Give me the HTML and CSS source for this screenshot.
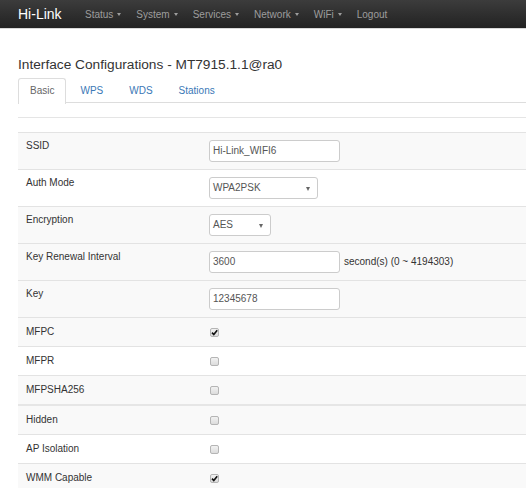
FILE: index.html
```html
<!DOCTYPE html>
<html>
<head>
<meta charset="utf-8">
<link rel="stylesheet" href="styles.css">
</head>
<body>
<header class="navbar">
  <span class="brand">Hi-Link</span>
  <ul class="nav">
    <li>Status<span class="caret"></span></li>
    <li>System<span class="caret"></span></li>
    <li>Services<span class="caret"></span></li>
    <li>Network<span class="caret"></span></li>
    <li>WiFi<span class="caret"></span></li>
    <li>Logout</li>
  </ul>
</header>
<main class="main">
  <h2 class="title">Interface Configurations - MT7915.1.1@ra0</h2>
  <ul class="tabs">
    <li class="tab active">Basic</li>
    <li class="tab">WPS</li>
    <li class="tab">WDS</li>
    <li class="tab">Stations</li>
  </ul>
  <div class="sep"></div>
  <table class="cfg">
    <tr class="g in"><td class="lbl">SSID</td><td><span class="field w130">Hi-Link_WIFI6</span></td></tr>
    <tr class="w in"><td class="lbl">Auth Mode</td><td><span class="field sel w109">WPA2PSK</span></td></tr>
    <tr class="g in"><td class="lbl">Encryption</td><td><span class="field sel w62">AES</span></td></tr>
    <tr class="g in"><td class="lbl">Key Renewal Interval</td><td><span class="inline"><span class="field w130">3600</span><span class="hint">second(s) (0 ~ 4194303)</span></span></td></tr>
    <tr class="g in"><td class="lbl">Key</td><td><span class="field w130">12345678</span></td></tr>
    <tr class="g cb"><td class="lbl">MFPC</td><td><span class="check on"><svg viewBox="0 0 9 9" width="9" height="9"><path d="M2 4.6 L3.8 6.6 L7.2 2.2" fill="none" stroke="#111" stroke-width="1.6"/></svg></span></td></tr>
    <tr class="w cb"><td class="lbl">MFPR</td><td><span class="check"></span></td></tr>
    <tr class="g cb"><td class="lbl">MFPSHA256</td><td><span class="check"></span></td></tr>
    <tr class="g cb thick"><td class="lbl">Hidden</td><td><span class="check"></span></td></tr>
    <tr class="w cb"><td class="lbl">AP Isolation</td><td><span class="check"></span></td></tr>
    <tr class="g cb"><td class="lbl">WMM Capable</td><td><span class="check on"><svg viewBox="0 0 9 9" width="9" height="9"><path d="M2 4.6 L3.8 6.6 L7.2 2.2" fill="none" stroke="#111" stroke-width="1.6"/></svg></span></td></tr>
  </table>
</main>
</body>
</html>
```
FILE: styles.css
```css
html, body {
  margin: 0;
  padding: 0;
  background: #fff;
  font-family: "Liberation Sans", Arial, sans-serif;
  overflow: hidden;
}

.navbar {
  height: 28px;
  background: linear-gradient(to bottom, #3c3c3c, #222);
  border-bottom: 1px solid #d8d8d8;
  display: flex;
  align-items: center;
  padding-left: 18px;
}

.brand {
  color: #fff;
  font-size: 14px;
  width: 67px;
}

.nav {
  list-style: none;
  margin: 0;
  padding: 0;
  display: flex;
  gap: 15px;
  font-size: 10px;
  color: #9d9d9d;
}

.nav li {
  display: flex;
  align-items: center;
}

.caret {
  display: inline-block;
  width: 0;
  height: 0;
  margin-left: 4px;
  border-left: 2.5px solid transparent;
  border-right: 2.5px solid transparent;
  border-top: 3px solid #9d9d9d;
}

.main {
  padding-left: 18px;
}

.title {
  margin: 0;
  padding-top: 27px;
  font-size: 13.7px;
  font-weight: normal;
  color: #333;
  line-height: 18px;
}

.tabs {
  list-style: none;
  margin: 4px 0 0 0;
  padding: 0;
  display: flex;
  border-bottom: 1px solid #ddd;
  font-size: 10px;
  height: 24px;
}

.tab {
  padding: 0 11px;
  margin-right: 2px;
  line-height: 24px;
  color: #3a78b6;
  border: 1px solid transparent;
  border-bottom: none;
  border-radius: 3px 3px 0 0;
}

.tab.active {
  color: #666;
  border-color: #ddd;
  background: #fff;
  height: 25px;
}

.sep {
  margin-top: 14px;
  border-top: 1px solid #e5e5e5;
}

.cfg {
  margin-top: 14px;
  width: 100%;
  border-collapse: collapse;
  font-size: 10px;
  color: #333;
}

.cfg td {
  border-top: 1px solid #e3e3e3;
  padding: 7px 8px;
  vertical-align: top;
  line-height: 14px;
}

.cfg tr.cb td {
  line-height: 15px;
}

.cfg tr.thick td {
  border-top: 2px solid #e6e6e6;
}

.cfg td.lbl {
  width: 167px;
  padding-top: 6px;
}

.cfg tr.g {
  background: #f9f9f9;
}

.cfg tr.w {
  background: #fff;
}

.field {
  display: block;
  box-sizing: border-box;
  height: 22px;
  line-height: 20px;
  border: 1px solid #ccc;
  border-radius: 3px;
  background: #fff;
  color: #555;
  padding: 0 3px;
  position: relative;
}

.w130 { width: 131px; }
.w109 { width: 109px; }
.w62 { width: 62px; }

.sel::after {
  content: "";
  position: absolute;
  right: 7px;
  top: 9px;
  border-left: 2.5px solid transparent;
  border-right: 2.5px solid transparent;
  border-top: 4px solid #666;
}

.inline {
  display: flex;
  align-items: center;
  gap: 4px;
}

.hint {
  color: #333;
}

.check {
  display: block;
  box-sizing: border-box;
  width: 9px;
  height: 9px;
  margin: 3px 0 0 1px;
  border: 1px solid #b5b5b5;
  border-radius: 2px;
  background: linear-gradient(to bottom, #f2f2f2, #dcdcdc);
  position: relative;
}

.check svg {
  position: absolute;
  left: -1px;
  top: -1px;
}
```
